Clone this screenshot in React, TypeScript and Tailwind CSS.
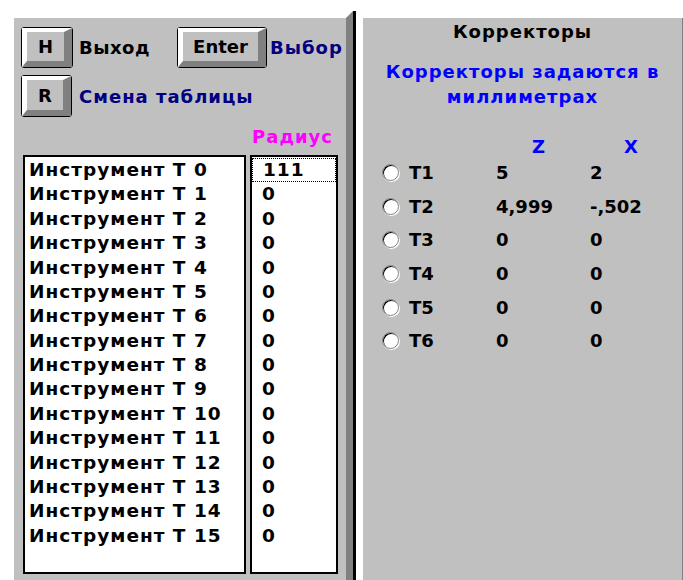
import React from 'react'

const tools = Array.from({ length: 16 }, (_, i) => ({
  name: `Инструмент T ${i}`,
  radius: i === 0 ? '111' : '0',
}))

const correctors = [
  { name: 'T1', z: '5', x: '2' },
  { name: 'T2', z: '4,999', x: '-,502' },
  { name: 'T3', z: '0', x: '0' },
  { name: 'T4', z: '0', x: '0' },
  { name: 'T5', z: '0', x: '0' },
  { name: 'T6', z: '0', x: '0' },
]

// raised keyboard key, the bevel comes from the mitred borders
function Key({ label, className }: { label: string; className: string }) {
  return (
    <div className={`${className} shrink-0 rounded-[3px] border-[1.5px] border-black bg-[#c0c0c0]`}>
      <div className="flex h-full w-full items-center justify-center border-t-[4px] border-l-[5px] border-r-[8px] border-b-[6px] border-t-white border-l-white border-r-[#808080] border-b-[#808080] bg-[#c0c0c0] text-[18px] font-bold text-black">
        {label}
      </div>
    </div>
  )
}

function Radio() {
  return (
    <div className="h-[17px] w-[17px] shrink-0 rounded-full border border-[#808080] bg-white shadow-[inset_1px_1px_0_#000,1px_1px_0_#fff]" />
  )
}

export default function App() {
  return (
    <div className="flex h-[580px] w-[683px] overflow-hidden bg-white pt-[18px] font-['DejaVu_Sans',sans-serif] font-bold tracking-[1px] text-black">
      {/* left panel: keys and tool table */}
      <div className="ml-[14px] flex w-[332px] shrink-0 flex-col bg-[#c0c0c0] pl-[7px] pt-[9px]">
        <div className="flex h-[41px] items-center">
          <div className="flex w-[156px] items-center">
            <Key label="H" className="h-[41px] w-[52px] tracking-normal" />
            <span className="ml-[6px] text-[18px] tracking-[0.5px]">Выход</span>
          </div>
          <Key label="Enter" className="h-[41px] w-[90px] tracking-normal" />
          <span className="ml-[3px] text-[18px] text-[#000080]">Выбор</span>
        </div>
        <div className="mt-[7px] flex h-[42px] items-center">
          <Key label="R" className="h-[42px] w-[51px] tracking-normal" />
          <span className="ml-[7px] text-[18px] text-[#000080]">Смена таблицы</span>
        </div>
        <div className="flex h-[38px] items-center justify-end pr-[13px] text-[18px] text-[#ff00ff]">
          Радиус
        </div>
        <div className="flex h-[419px] pl-[2px]">
          <div className="w-[223px] border-2 border-black bg-white pl-[4px] pt-[1px]">
            {tools.map((t) => (
              <div key={t.name} className="flex h-[24.4px] items-center text-[18.5px] leading-none">
                {t.name}
              </div>
            ))}
          </div>
          <div className="ml-[4px] w-[88px] border-2 border-black bg-white pt-[1px]">
            {tools.map((t, i) => (
              <div
                key={t.name}
                className={`flex h-[24.4px] items-center pl-[10px] text-[18.5px] leading-none ${
                  i === 0 ? 'border border-dotted border-black pl-[9px] font-semibold' : ''
                }`}
              >
                {t.radius}
              </div>
            ))}
          </div>
        </div>
      </div>

      {/* splitter */}
      <div className="-mt-[7px] flex w-[17px] shrink-0">
        <div className="w-[7px] bg-[#808080] [clip-path:polygon(0_7px,100%_0,100%_100%,0_100%)]" />
        <div className="w-[3px] bg-black" />
        <div className="w-[7px] bg-white" />
      </div>

      {/* right panel: correctors */}
      <div className="flex flex-1 flex-col border-r border-[#808080] bg-[#c0c0c0] pt-[1px]">
        <div className="text-center text-[18px] leading-[25px]">Корректоры</div>
        <div className="mt-[15px] text-center text-[18px] leading-[25px] text-[#0000ff]">
          Корректоры задаются в
          <br />
          миллиметрах
        </div>
        <div className="mt-[27px] flex h-[20px] items-center pl-[19px] text-[18px] text-[#0000ff]">
          <div className="w-[114px]" />
          <div className="w-[94px] pl-[36px]">Z</div>
          <div className="pl-[34px]">X</div>
        </div>
        {correctors.map((c) => (
          <div key={c.name} className="flex h-[33.6px] items-center pl-[19px] text-[18px] tracking-normal">
            <div className="flex w-[114px] items-center">
              <Radio />
              <span className="ml-[10px]">{c.name}</span>
            </div>
            <div className="w-[94px]">{c.z}</div>
            <div>{c.x}</div>
          </div>
        ))}
      </div>
    </div>
  )
}
